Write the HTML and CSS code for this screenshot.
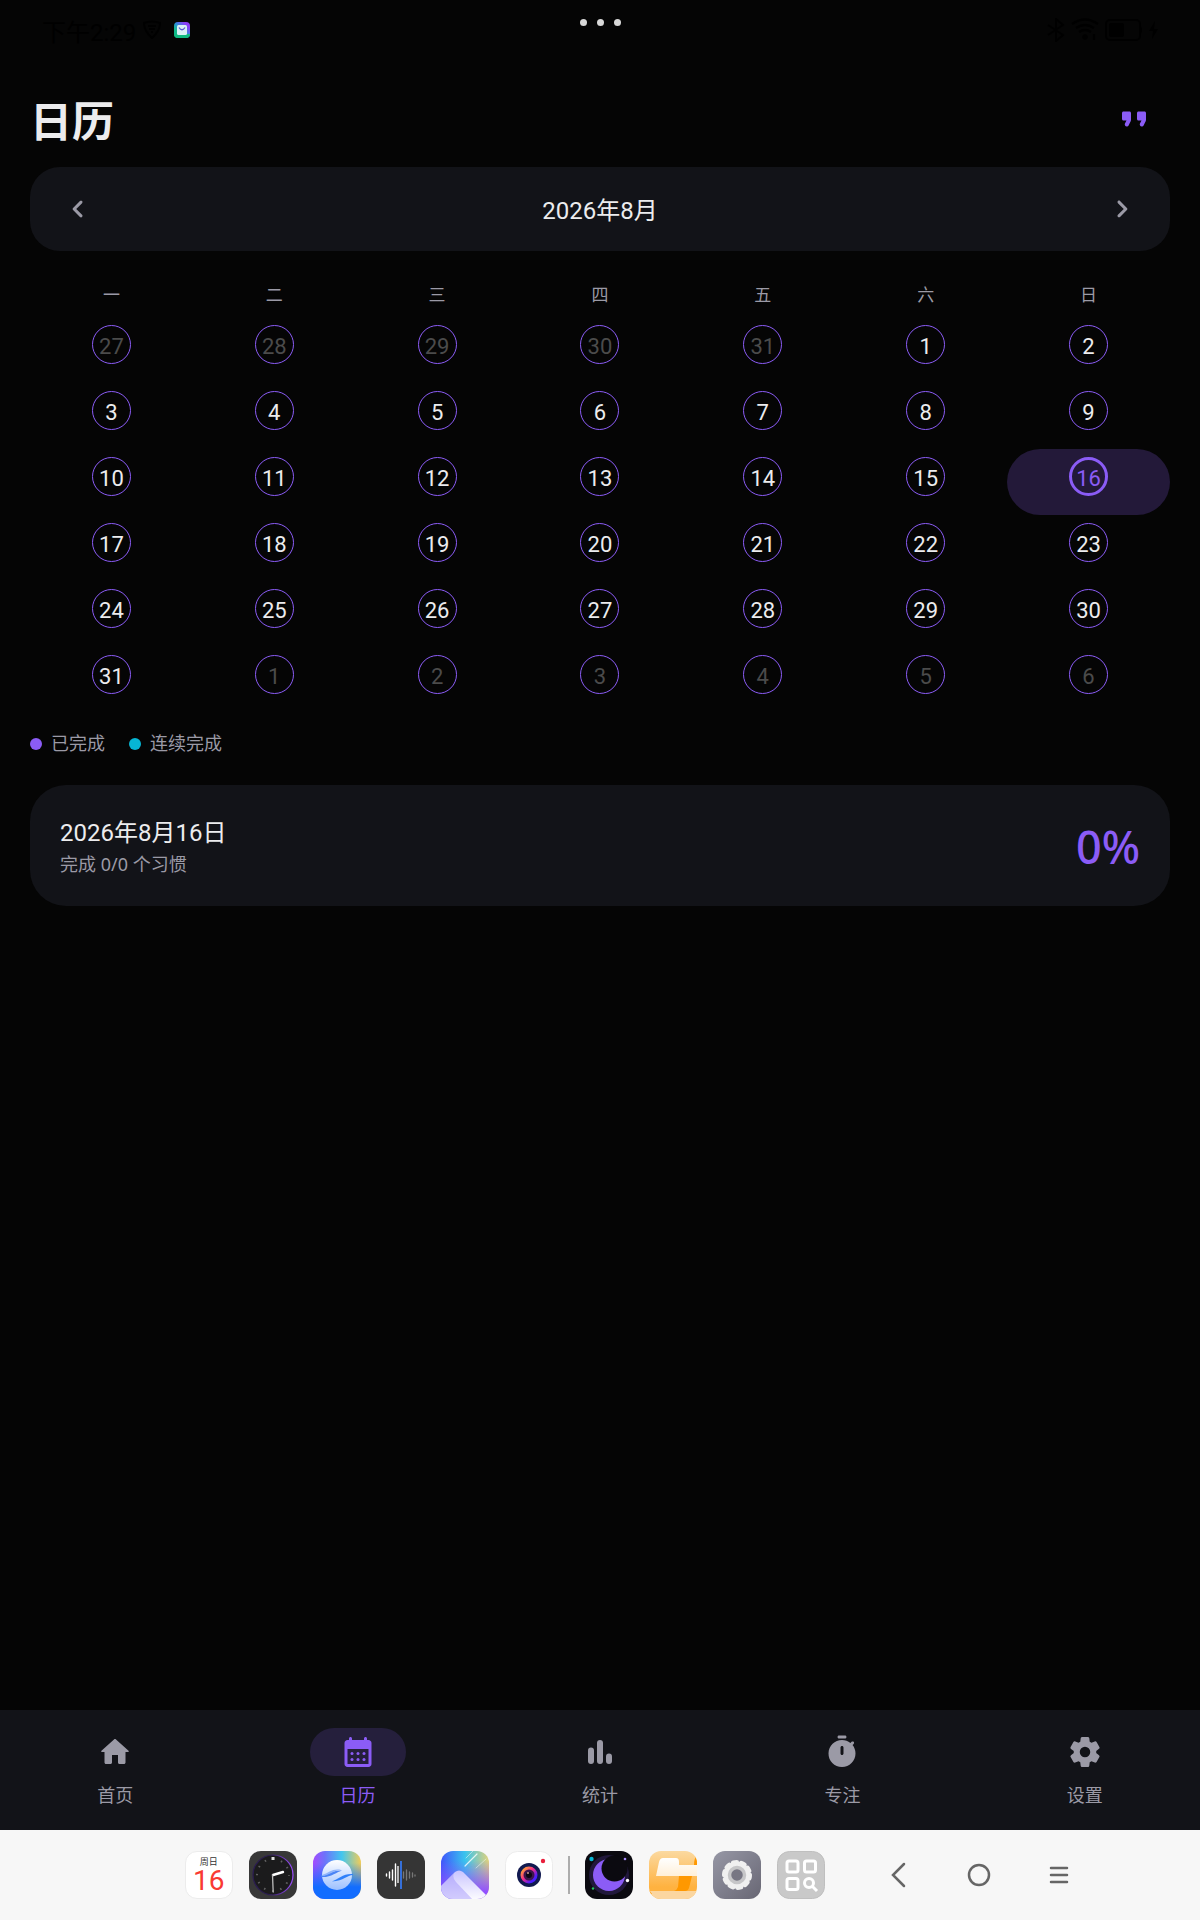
FILE: index.html
```html
<!DOCTYPE html>
<html lang="zh-CN">
<head>
<meta charset="utf-8">
<meta name="viewport" content="width=device-width, initial-scale=1">
<title>日历</title>
<link rel="stylesheet" href="styles.css">
</head>
<body>
<div class="status">
  <div class="status-left">
    <span class="time">下午2:29</span>
    <svg width="20" height="20" viewBox="0 0 20 20" fill="none" stroke="currentColor" stroke-width="2" stroke-linejoin="round"><path d="M2 3Q10 0 18 3Q18 11 10 18Q2 11 2 3zM6 6h8M7 9h6M9 12h2"/></svg>
    <svg class="status-app" width="16" height="16" viewBox="0 0 16 16"><defs><linearGradient id="mail" x1="0" y1="1" x2="1" y2="0"><stop offset=".3" stop-color="#0fb98a"/><stop offset=".5" stop-color="#2a8fd8"/><stop offset=".8" stop-color="#8b3ff6"/></linearGradient></defs><rect width="16" height="16" rx="4" fill="url(#mail)"/><path d="M0 12h16a4 4 0 0 1-4 4H4a4 4 0 0 1-4-4z" fill="#0fb981"/><rect x="3" y="3" width="10" height="10" rx="1.500" fill="#d9f1f6"/><path d="M5 5.500Q8 10 11 5.500" fill="none" stroke="#5a57d6" stroke-width="1.300"/></svg>
  </div>
  <div class="status-dots"><i></i><i></i><i></i></div>
  <div class="status-right">
    <svg width="18" height="24" viewBox="0 0 18 24" fill="none" stroke="currentColor" stroke-width="2"><path d="M1 7l15 10-7 6V1l7 6L1 17"/></svg>
    <svg width="28" height="24" viewBox="0 0 28 24" fill="none" stroke="currentColor" stroke-width="2.400"><path d="M1 6Q14-3 27 6M5 10Q14 4 23 10M8 14Q14 10 20 14"/><circle cx="14" cy="19" r="1.500"/><path d="M23 16v6"/></svg>
    <svg width="38" height="22" viewBox="0 0 38 22"><rect x="1" y="1" width="34" height="20" rx="4" fill="none" stroke="currentColor" stroke-width="2"/><rect x="4" y="4" width="15" height="14" rx="2" fill="currentColor"/><path d="M36 7q2 4 0 8z" fill="currentColor"/></svg>
    <svg width="9" height="18" viewBox="0 0 9 18" fill="currentColor"><path d="M6 0L0 10h4l-1 8 6-10H5z"/></svg>
  </div>
</div>

<main class="page">
  <header class="header">
    <h1>日历</h1>
    <button class="icon-btn quote" type="button" aria-label="每日一言"><svg width="36" height="36" viewBox="0 0 24 24" fill="currentColor"><path id="q" d="M7.170 17c.51 0 .98-.29 1.200-.74l1.420-2.840c.14-.28.21-.58.21-.89V8c0-.55-.45-1-1-1H5c-.55 0-1 .45-1 1v4c0 .55.45 1 1 1h2l-1.030 2.060c-.45.89.2 1.940 1.200 1.940z"/><use href="#q" x="10"/></svg></button>
  </header>

  <section class="month">
    <button class="icon-btn" type="button" aria-label="上个月"><svg width="36" height="36" viewBox="0 0 24 24" fill="currentColor"><path d="M14.710 6.710c-.39-.39-1.020-.39-1.410 0L8.710 11.300c-.39.39-.39 1.020 0 1.410l4.590 4.590c.39.39 1.020.39 1.410 0 .39-.39.39-1.020 0-1.410L10.830 12l3.880-3.880c.39-.39.38-1.030 0-1.410z"/></svg></button>
    <h2>2026年8月</h2>
    <button class="icon-btn" type="button" aria-label="下个月"><svg width="36" height="36" viewBox="0 0 24 24" fill="currentColor"><path d="M9.290 6.710c-.39.39-.39 1.020 0 1.410L13.170 12l-3.880 3.880c-.39.39-.39 1.020 0 1.410.39.39 1.020.39 1.410 0l4.590-4.590c.39-.39.39-1.020 0-1.410L10.700 6.700c-.38-.38-1.020-.38-1.410.01z"/></svg></button>
  </section>

  <table class="calendar">
    <thead><tr><th>一</th><th>二</th><th>三</th><th>四</th><th>五</th><th>六</th><th>日</th></tr></thead>
    <tbody>
      <tr><td><button class="day out"><span>27</span></button></td><td><button class="day out"><span>28</span></button></td><td><button class="day out"><span>29</span></button></td><td><button class="day out"><span>30</span></button></td><td><button class="day out"><span>31</span></button></td><td><button class="day"><span>1</span></button></td><td><button class="day"><span>2</span></button></td></tr>
      <tr><td><button class="day"><span>3</span></button></td><td><button class="day"><span>4</span></button></td><td><button class="day"><span>5</span></button></td><td><button class="day"><span>6</span></button></td><td><button class="day"><span>7</span></button></td><td><button class="day"><span>8</span></button></td><td><button class="day"><span>9</span></button></td></tr>
      <tr><td><button class="day"><span>10</span></button></td><td><button class="day"><span>11</span></button></td><td><button class="day"><span>12</span></button></td><td><button class="day"><span>13</span></button></td><td><button class="day"><span>14</span></button></td><td><button class="day"><span>15</span></button></td><td><button class="day selected" aria-current="date"><span>16</span></button></td></tr>
      <tr><td><button class="day"><span>17</span></button></td><td><button class="day"><span>18</span></button></td><td><button class="day"><span>19</span></button></td><td><button class="day"><span>20</span></button></td><td><button class="day"><span>21</span></button></td><td><button class="day"><span>22</span></button></td><td><button class="day"><span>23</span></button></td></tr>
      <tr><td><button class="day"><span>24</span></button></td><td><button class="day"><span>25</span></button></td><td><button class="day"><span>26</span></button></td><td><button class="day"><span>27</span></button></td><td><button class="day"><span>28</span></button></td><td><button class="day"><span>29</span></button></td><td><button class="day"><span>30</span></button></td></tr>
      <tr><td><button class="day"><span>31</span></button></td><td><button class="day out"><span>1</span></button></td><td><button class="day out"><span>2</span></button></td><td><button class="day out"><span>3</span></button></td><td><button class="day out"><span>4</span></button></td><td><button class="day out"><span>5</span></button></td><td><button class="day out"><span>6</span></button></td></tr>
    </tbody>
  </table>

  <ul class="legend">
    <li class="done">已完成</li>
    <li class="streak">连续完成</li>
  </ul>

  <section class="summary">
    <div>
      <h3>2026年8月16日</h3>
      <p>完成 0/0 个习惯</p>
    </div>
    <strong>0%</strong>
  </section>
</main>

<nav class="tabs">
  <a href="#home"><span class="pill"><svg width="36" height="36" viewBox="0 0 24 24" fill="currentColor"><path d="M10 19v-5h4v5c0 .55.45 1 1 1h3c.55 0 1-.45 1-1v-7h1.700c.46 0 .68-.57.33-.87L12.670 3.600c-.38-.34-.96-.34-1.340 0l-8.360 7.530c-.34.3-.13.87.33.87H5v7c0 .55.45 1 1 1h3c.55 0 1-.45 1-1z"/></svg></span>首页</a>
  <a href="#calendar" class="active" aria-current="page"><span class="pill"><svg width="36" height="36" viewBox="0 0 24 24" fill="currentColor"><path fill-rule="evenodd" d="M19 4h-1V3c0-.55-.45-1-1-1s-1 .45-1 1v1H8V3c0-.55-.45-1-1-1s-1 .45-1 1v1H5c-1.110 0-2 .9-2 2v14c0 1.100.89 2 2 2h14c1.100 0 2-.9 2-2V6c0-1.100-.9-2-2-2zM5 10h14v10H5z"/><circle cx="8" cy="13" r="1"/><circle cx="12" cy="13" r="1"/><circle cx="16" cy="13" r="1"/><circle cx="8" cy="17" r="1"/><circle cx="12" cy="17" r="1"/><circle cx="16" cy="17" r="1"/></svg></span>日历</a>
  <a href="#stats"><span class="pill"><svg width="36" height="36" viewBox="0 0 24 24" fill="currentColor"><rect x="4" y="9" width="4" height="11" rx="2"/><rect x="10" y="4" width="4" height="16" rx="2"/><rect x="16" y="13" width="4" height="7" rx="2"/></svg></span>统计</a>
  <a href="#focus"><span class="pill"><svg width="36" height="36" viewBox="0 0 24 24" fill="currentColor" fill-rule="evenodd"><path d="M14 1h-4c-.55 0-1 .45-1 1s.45 1 1 1h4c.55 0 1-.45 1-1s-.45-1-1-1zm-2 13c.55 0 1-.45 1-1V9c0-.55-.45-1-1-1s-1 .45-1 1v4c0 .55.45 1 1 1zm7.030-6.610l.75-.75c.38-.38.39-1.010 0-1.400l-.01-.01c-.39-.39-1.010-.38-1.400 0l-.75.75C16.070 4.740 14.120 4 12 4c-4.800 0-8.880 3.960-9 8.760C2.870 17.840 6.940 22 12 22c4.980 0 9-4.030 9-9 0-2.120-.74-4.070-1.970-5.610z"/></svg></span>专注</a>
  <a href="#settings"><span class="pill"><svg width="36" height="36" viewBox="0 0 24 24" fill="currentColor" fill-rule="evenodd"><path d="M19.500 12c0-.23-.01-.45-.03-.68l1.860-1.410c.4-.3.51-.86.26-1.300l-1.870-3.230c-.25-.44-.79-.62-1.250-.42l-2.150.91c-.37-.26-.76-.49-1.170-.68l-.29-2.310c-.06-.5-.49-.88-.99-.88h-3.730c-.51 0-.94.38-1 .88l-.29 2.310c-.41.19-.8.42-1.170.68l-2.150-.91c-.46-.2-1-.02-1.250.42L2.410 8.620c-.25.44-.14.99.26 1.300l1.860 1.410C4.510 11.550 4.500 11.770 4.500 12s.01.45.03.68l-1.860 1.410c-.4.3-.51.86-.26 1.300l1.870 3.230c.25.44.79.62 1.250.42l2.150-.91c.37.26.76.49 1.170.68l.29 2.310c.06.5.49.88.99.88h3.730c.5 0 .93-.38.99-.88l.29-2.310c.41-.19.8-.42 1.170-.68l2.150.91c.46.2 1 .02 1.250-.42l1.870-3.230c.25-.44.14-.99-.26-1.300l-1.860-1.410c.03-.23.04-.45.04-.68zM12 15.500a3.500 3.500 0 1 1 0-7 3.500 3.500 0 0 1 0 7z"/></svg></span>设置</a>
</nav>

<footer class="dock">
  <div class="apps">
    <button class="app app-date" type="button" aria-label="日历"><small>周日</small><b>16</b></button>
    <button class="app" type="button" aria-label="时钟"><svg viewBox="0 0 48 48"><defs><linearGradient id="ring" x1="0" x2="1"><stop offset=".4" stop-color="#2a1c50"/><stop offset="1" stop-color="#9b4dff"/></linearGradient></defs><rect width="48" height="48" rx="12" fill="#383838"/><circle cx="24" cy="24" r="20" fill="#1b1b1c" stroke="url(#ring)" stroke-width="1.200"/><circle cx="24" cy="24" r="16" fill="none" stroke="#606060" stroke-width="2" stroke-dasharray="1.500 6.880" stroke-dashoffset=".7"/><path d="M24 6v3" stroke="#ddd" stroke-width="3"/><path d="M24 24l10-3" stroke="#fff" stroke-width="2.400" stroke-linecap="round"/><path d="M23.500 24l.7 17" stroke="#bbb" stroke-width="1.300" stroke-linecap="round"/></svg></button>
    <button class="app" type="button" aria-label="浏览器"><svg viewBox="0 0 48 48"><defs><linearGradient id="br" x1="0" x2="1"><stop offset="0" stop-color="#a44bff"/><stop offset=".25" stop-color="#6d73fa"/><stop offset=".6" stop-color="#42c6ef"/><stop offset="1" stop-color="#f2cc58"/></linearGradient><linearGradient id="bb" x1="0" y1="0" x2="0" y2="1"><stop offset=".25" stop-color="#176bff" stop-opacity="0"/><stop offset=".75" stop-color="#126dff"/></linearGradient><linearGradient id="bw" x1="0" y1="0" x2="0" y2="1"><stop offset="0" stop-color="#fff"/><stop offset="1" stop-color="#9cc0ff"/></linearGradient></defs><rect width="48" height="48" rx="12" fill="url(#br)"/><rect width="48" height="48" rx="12" fill="url(#bb)"/><circle cx="24" cy="24" r="15" fill="url(#bw)"/><path d="M8 24C14 26 17 19 29 19.500C24 21 17 27 8 26z" fill="#4a84f5"/><path d="M40 24C34 24 31 30 19 30.500C25 28 31 22 40 23z" fill="#2f80fa"/><path d="M9 24C16 22 20 17 28 19C20 19 16 25 9 25z" fill="#8fb4fb"/></svg></button>
    <button class="app" type="button" aria-label="录音机"><svg viewBox="0 0 48 48" fill="none" stroke-linecap="round"><rect width="48" height="48" rx="12" fill="#353535"/><path d="M9.500 23v2M12.500 21v6M15.500 19v10M18.500 13v22" stroke="#fff" stroke-width="1.400"/><path d="M21 15v17" stroke="#b6b6b6" stroke-width="2" stroke-linecap="butt"/><path d="M26.500 21v6M29.500 19v10M32.500 21v6M35.500 22v4M38 24v1" stroke="#777" stroke-width="1.300"/><path d="M24 10v28" stroke="#356fd9" stroke-width="2" stroke-linecap="butt"/></svg></button>
    <button class="app" type="button" aria-label="相册"><svg viewBox="0 0 48 48"><defs><linearGradient id="ga" x1="0" x2="1"><stop offset="0" stop-color="#3f55fb"/><stop offset=".5" stop-color="#39c4ee"/><stop offset="1" stop-color="#e2d27c"/></linearGradient><linearGradient id="gb" x1="0" y1="0" x2="0" y2="1"><stop offset=".2" stop-color="#8d4dff" stop-opacity="0"/><stop offset=".85" stop-color="#9250ff"/></linearGradient><linearGradient id="gm" x1="0" y1="0" x2="0" y2="1"><stop offset="0" stop-color="#c9c4ff"/><stop offset="1" stop-color="#fff"/></linearGradient><clipPath id="gc"><rect width="48" height="48" rx="12"/></clipPath></defs><g clip-path="url(#gc)"><path d="M0 0h48v48H0z" fill="url(#ga)"/><path d="M0 0h48v48H0z" fill="url(#gb)"/><path d="M-2 37L14 21q4-3 8 0l26 26v3H-2z" fill="url(#gm)"/><path d="M-2 37L13 22q-2 5 2 9l18 19H-2z" fill="#9384fa" opacity=".4"/><path d="M24 15L36 3" stroke="#fff" stroke-width="1.200" stroke-linecap="round" opacity=".8"/><path d="M35 17l10-9M25 7l8-8" stroke="#fff" stroke-linecap="round" opacity=".45"/></g></svg></button>
    <button class="app" type="button" aria-label="相机"><svg viewBox="0 0 48 48"><defs><linearGradient id="cam" x1="0" y1="0" x2="1" y2="1"><stop offset=".1" stop-color="#ffb12c"/><stop offset=".45" stop-color="#f3298a"/><stop offset=".75" stop-color="#4a1dff"/></linearGradient></defs><rect x=".5" y=".5" width="47" height="47" rx="12" fill="#fff" stroke="#ececec"/><circle cx="24" cy="24" r="12" fill="#111a50"/><circle cx="24" cy="24" r="8.500" fill="url(#cam)"/><circle cx="24" cy="24" r="5.500" fill="#3c164d"/><circle cx="24" cy="24" r="3" fill="#0b0712"/><circle cx="23" cy="22" r="1" fill="#c99"/><circle cx="38" cy="10" r="2.200" fill="#e91f3c"/></svg></button>
    <i class="divider"></i>
    <button class="app" type="button" aria-label="习惯"><svg viewBox="0 0 48 48"><rect width="48" height="48" rx="12" fill="#0b0a10"/><circle cx="24" cy="24" r="20" fill="#21183b"/><circle cx="24" cy="24" r="16" fill="#8b5cf6"/><circle cx="29.500" cy="17.500" r="13" fill="#0b0a10"/><circle cx="6.500" cy="8" r="2.200" fill="#06b6d4"/><circle cx="40" cy="8" r="1.300" fill="#a78bfa"/><circle cx="42.500" cy="29.500" r="1.700" fill="#fff"/><circle cx="8" cy="37.500" r="1.200" fill="#22c55e"/></svg></button>
    <button class="app" type="button" aria-label="文件管理"><svg viewBox="0 0 48 48"><defs><linearGradient id="fa" x1="0" y1="0" x2="0" y2="1"><stop offset="0" stop-color="#fbd9a0"/><stop offset=".75" stop-color="#ffb240"/><stop offset="1" stop-color="#ffb240"/></linearGradient><linearGradient id="fb" x1="0" y1="0" x2="0" y2="1"><stop offset="0" stop-color="#fff"/><stop offset="1" stop-color="#fff0d9"/></linearGradient><clipPath id="fc"><rect width="48" height="48" rx="12"/></clipPath></defs><g clip-path="url(#fc)"><path d="M0 0h48v48H0z" fill="url(#fa)"/><path d="M48 5q-3 2-3 9h3z" fill="#ff9800"/><path d="M29 25h19v15H0v8h48V20z" fill="#fbd6a0"/><path d="M30 25h13l-3 12q-1 3-4 3H25q3-1 4-4z" fill="#ff9800"/><path d="M10 11q1-4 4-4h13q3 0 3 4v3h18v11H7z" fill="url(#fb)"/><path d="M0 39l3 4H0z" fill="#ff9800"/></g></svg></button>
    <button class="app" type="button" aria-label="系统设置"><svg viewBox="0 0 48 48"><defs><linearGradient id="sg" x1="0" y1="0" x2="1" y2="1"><stop offset="0" stop-color="#9697a5"/><stop offset="1" stop-color="#686774"/></linearGradient></defs><rect width="48" height="48" rx="12" fill="url(#sg)"/><circle cx="24" cy="24" r="12.500" fill="#f0f0f0"/><circle cx="24" cy="24" r="12.500" fill="none" stroke="#f0f0f0" stroke-width="5" stroke-linecap="round" stroke-dasharray="3.200 4.654"/><circle cx="24" cy="24" r="7.500" fill="#777683" stroke="#c6c6c8" stroke-width="3.500"/></svg></button>
    <button class="app" type="button" aria-label="全部应用"><svg viewBox="0 0 48 48" fill="none" stroke="#fff" stroke-width="3"><rect x=".5" y=".5" width="47" height="47" rx="12" fill="#c9c9c9" stroke="#bfbfbf" stroke-width="1"/><rect x="10" y="10" width="11" height="11" rx="2"/><rect x="27.500" y="10" width="11" height="11" rx="2"/><rect x="10" y="27.500" width="11" height="11" rx="2"/><circle cx="32" cy="32" r="4.500"/><path d="M35.500 35.500l4.500 4.500"/></svg></button>
  </div>
  <div class="system">
    <button type="button" aria-label="返回"><svg width="26" height="26" viewBox="0 0 26 26"><path d="M18 2L7 13l11 11"/></svg></button>
    <button type="button" aria-label="主屏幕"><svg width="26" height="26" viewBox="0 0 26 26"><circle cx="13" cy="13" r="10"/></svg></button>
    <button type="button" aria-label="最近任务"><svg width="26" height="26" viewBox="0 0 26 26"><path d="M5 6h16M5 13h16M5 20h16"/></svg></button>
  </div>
</footer>
</body>
</html>
```
FILE: styles.css
```css
:root {
  --bg: #050505;
  --surface: #121318;
  --text: #ececee;
  --muted: #9b9aa6;
  --accent: #8b5cf6;
}

* { box-sizing: border-box; }

body {
  margin: 0;
  min-height: 100vh;
  display: flex;
  flex-direction: column;
  background: var(--bg);
  color: var(--text);
  font-family: Roboto, "Noto Sans CJK SC", sans-serif;
}

h1, h2, h3, p, ul { margin: 0; padding: 0; }

button {
  border: 0;
  padding: 0;
  background: none;
  color: inherit;
  font: inherit;
  cursor: pointer;
}

svg { display: block; }

/* Status bar */
.status {
  height: 60px;
  padding: 0 42px;
  display: grid;
  grid-template-columns: 1fr auto 1fr;
  color: #000;
}
.status-left, .status-right {
  display: flex;
  align-items: center;
}
.status-left { font-size: 24px; gap: 6px; }
.status-app { margin-left: 6px; }
.status-right { justify-content: flex-end; gap: 6px; }
.status-dots {
  display: flex;
  gap: 10px;
  padding-top: 19px;
}
.status-dots i {
  width: 7px;
  height: 7px;
  border-radius: 50%;
  background: #d8d8d8;
}

/* Page */
.page {
  flex: 1;
  padding: 23px 30px 30px;
}
.header {
  display: flex;
  align-items: center;
  justify-content: space-between;
  margin-bottom: 12px;
}
.header h1 {
  padding-top: 8px;
  font-size: 42px;
  line-height: 60px;
  font-weight: 700;
}
.icon-btn {
  width: 72px;
  height: 72px;
  display: flex;
  align-items: center;
  justify-content: center;
  color: var(--muted);
}
.icon-btn.quote { color: var(--accent); }

.month {
  display: flex;
  align-items: center;
  justify-content: space-between;
  padding: 6px 12px;
  border-radius: 30px;
  background: var(--surface);
}
.month h2, .summary h3 {
  font-size: 24px;
  line-height: 36px;
  font-weight: 400;
}
.month h2 { padding-top: 4px; }

/* Calendar */
.calendar {
  width: 100%;
  margin-top: 18px;
  table-layout: fixed;
  border-collapse: collapse;
}
.calendar th {
  height: 48px;
  padding: 0;
  font-size: 17px;
  font-weight: 400;
  color: var(--muted);
}
.calendar td { padding: 0; }
.day {
  width: 100%;
  height: 66px;
  padding-top: 8px;
  display: flex;
  align-items: flex-start;
  justify-content: center;
  border-radius: 33px;
  font-size: 22px;
}
.day span {
  width: 39px;
  height: 39px;
  padding-top: 3px;
  display: flex;
  align-items: center;
  justify-content: center;
  border-radius: 50%;
  border: 1px solid var(--accent);
}
.day.out { color: #4b4b4b; }
.day.selected {
  background: #231939;
  color: var(--accent);
}
.day.selected span { border-width: 3px; }

/* Legend */
.legend {
  display: flex;
  gap: 24px;
  margin: 18px 0 28px;
  list-style: none;
  font-size: 18px;
  line-height: 26px;
  color: var(--muted);
}
.legend li {
  display: flex;
  align-items: center;
  gap: 9px;
}
.legend li::before {
  content: "";
  width: 12px;
  height: 12px;
  border-radius: 50%;
  background: var(--accent);
}
.legend .streak::before { background: #06b6d4; }

/* Day summary */
.summary {
  display: flex;
  align-items: center;
  justify-content: space-between;
  padding: 30px 30px 28px;
  border-radius: 36px;
  background: var(--surface);
}
.summary p {
  font-family: "Noto Sans", "Noto Sans CJK SC", sans-serif;
  font-size: 18px;
  line-height: 27px;
  color: var(--muted);
}
.summary strong {
  font-family: "Noto Sans", sans-serif;
  font-size: 45px;
  line-height: 54px;
  font-weight: 500;
  color: var(--accent);
}

/* Bottom tabs */
.tabs {
  display: grid;
  grid-template-columns: repeat(5, 1fr);
  gap: 12px;
  height: 120px;
  padding-top: 18px;
  background: var(--surface);
}
.tabs a {
  display: flex;
  flex-direction: column;
  align-items: center;
  gap: 8px;
  font-size: 18px;
  line-height: 24px;
  color: var(--muted);
  text-decoration: none;
}
.pill {
  width: 96px;
  height: 48px;
  display: flex;
  align-items: center;
  justify-content: center;
  border-radius: 24px;
}
.tabs .active { color: var(--accent); }
.active .pill { background: #251f3c; }

/* System dock */
.dock {
  display: flex;
  align-items: center;
  gap: 34px;
  height: 90px;
  padding-left: 15.4%;
  background: #f7f7f7;
}
.apps {
  display: flex;
  align-items: center;
  gap: 16px;
}
.app {
  width: 48px;
  height: 48px;
}
.app-date {
  display: flex;
  flex-direction: column;
  align-items: center;
  border: 1px solid #ececec;
  border-radius: 12px;
  background: #fff;
}
.app-date small {
  margin-top: 4px;
  font-size: 9px;
  line-height: 12px;
  color: #333;
}
.app-date b {
  font-size: 28px;
  line-height: 26px;
  font-weight: 400;
  color: #f93a32;
}
.divider {
  width: 2px;
  height: 38px;
  margin: 0 -1px;
  background: #adadad;
}
.system { display: flex; }
.system button {
  width: 80px;
  height: 48px;
  display: flex;
  align-items: center;
  justify-content: center;
}
.system svg {
  fill: none;
  stroke: #666;
  stroke-width: 2.5px;
  stroke-linecap: round;
}
```
